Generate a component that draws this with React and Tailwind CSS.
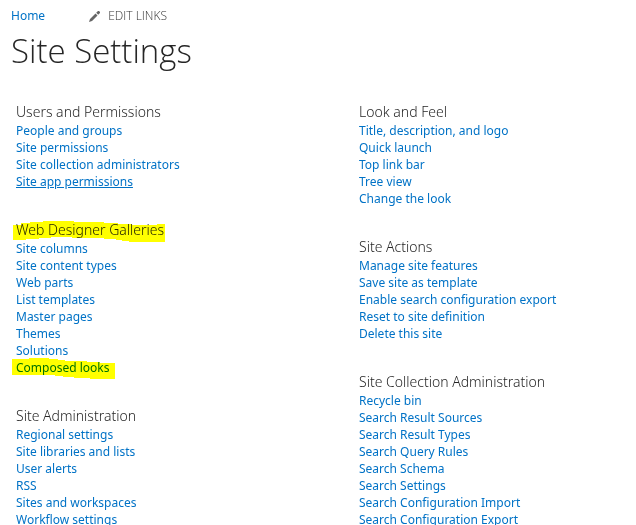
import React from 'react'

const leftSections = [
  {
    title: 'Users and Permissions',
    links: ['People and groups', 'Site permissions', 'Site collection administrators', 'Site app permissions'],
  },
  {
    title: 'Web Designer Galleries',
    links: ['Site columns', 'Site content types', 'Web parts', 'List templates', 'Master pages', 'Themes', 'Solutions', 'Composed looks'],
  },
  {
    title: 'Site Administration',
    links: ['Regional settings', 'Site libraries and lists', 'User alerts', 'RSS', 'Sites and workspaces', 'Workflow settings'],
  },
]

const rightSections = [
  {
    title: 'Look and Feel',
    links: ['Title, description, and logo', 'Quick launch', 'Top link bar', 'Tree view', 'Change the look'],
  },
  {
    title: 'Site Actions',
    links: ['Manage site features', 'Save site as template', 'Enable search configuration export', 'Reset to site definition', 'Delete this site'],
  },
  {
    title: 'Site Collection Administration',
    links: ['Recycle bin', 'Search Result Sources', 'Search Result Types', 'Search Query Rules', 'Search Schema', 'Search Settings', 'Search Configuration Import', 'Search Configuration Export'],
  },
]

// hand-drawn marker strokes, multiplied over the highlighted texts
function Marker({ shape }) {
  if (shape === 'heading') {
    return (
      <svg className="pointer-events-none absolute -left-1 -top-1 mix-blend-multiply" width="154" height="28" viewBox="0 -4 154 28" fill="#ffff00" aria-hidden="true">
        <path d="M1 5 H9 V3 H18 V2 H31 V1 H62 V2 H92 V3 H106 V4 H120 V5 H145 V4 H153 V22 H117 V21 H110 V20 H104 V19 H92 V18 H60 V17 H39 V18 H27 V19 H14 V20 H1 Z" />
      </svg>
    )
  }
  return (
    <svg className="pointer-events-none absolute -left-1 -top-1 mix-blend-multiply" width="104" height="25" viewBox="0 -1 104 25" fill="#ffff00" aria-hidden="true">
      <path d="M0 3 H17 V2 H37 V3 H46 V4 H53 V5 H75 V6 H88 V7 H103 V23 H78 V22 H62 V21 H51 V20 H43 V19 H0 Z" />
    </svg>
  )
}

function Section({ section }) {
  return (
    <section>
      <h2 className="text-sm leading-5 font-light text-[#262626]">
        <span className="relative">
          {section.title}
          {section.title === 'Web Designer Galleries' && <Marker shape="heading" />}
        </span>
      </h2>
      <ul className="text-xs leading-[17px] text-[#0072c6]">
        {section.links.map(link => (
          <li key={link}>
            <a href="#" className={link === 'Site app permissions' ? 'relative underline' : 'relative hover:underline'}>
              {link}
              {link === 'Composed looks' && <Marker shape="link" />}
            </a>
          </li>
        ))}
      </ul>
    </section>
  )
}

export default function App() {
  return (
    <div className="isolate h-screen overflow-hidden bg-white font-['Noto_Sans',sans-serif]">
      <header className="px-[11px] pt-2">
        <nav className="flex items-center gap-11 text-xs leading-4">
          <a href="#" className="text-[#0072c6]">Home</a>
          <button type="button" className="flex items-center gap-2 font-['Open_Sans',sans-serif] text-xs leading-4 font-light text-[#333]">
            <svg width="11" height="11" viewBox="0 0 11 11" fill="#666" aria-hidden="true">
              <path d="M0 11 L1 8 L6.5 2.5 L8.5 4.5 L3 10 Z M7.2 1.8 L9 0 H10 L11 1 V2 L9.2 3.8 Z" />
            </svg>
            EDIT LINKS
          </button>
        </nav>
        <h1 className="mt-1 font-['Open_Sans',sans-serif] text-[33px] leading-[46px] font-light text-[#262626]">Site Settings</h1>
      </header>
      <main className="mt-7 grid grid-cols-[343px_1fr] px-4">
        <div className="flex flex-col gap-[30px]">
          {leftSections.map(s => <Section key={s.title} section={s} />)}
        </div>
        <div className="flex flex-col gap-[30px]">
          {rightSections.map(s => <Section key={s.title} section={s} />)}
        </div>
      </main>
    </div>
  )
}
